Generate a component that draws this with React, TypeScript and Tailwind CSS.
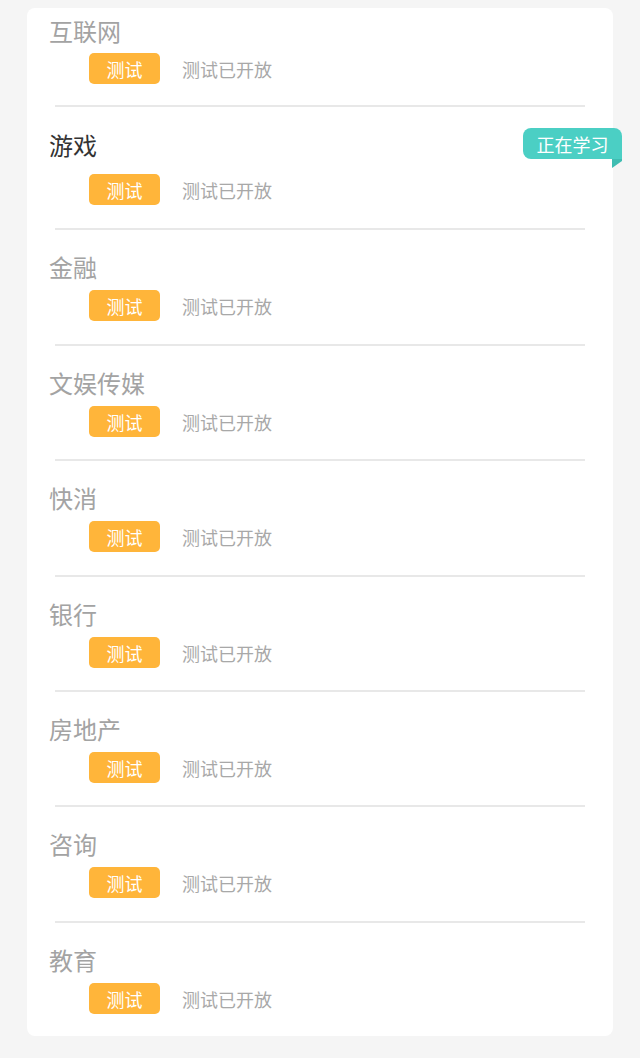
import React from 'react';

const industries = ['互联网', '游戏', '金融', '文娱传媒', '快消', '银行', '房地产', '咨询', '教育'];
const activeIndex = 1;

// bottom padding per row, keeps the dividers where the screen has them
const bottomPad = ['pb-[21px]', 'pb-[23px]', 'pb-[23px]', 'pb-[22px]', 'pb-[23px]', 'pb-[22px]', 'pb-[22px]', 'pb-[23px]', 'pb-[22px]'];

function LearningTag() {
  return (
    <div className="absolute right-[-9px] top-[23px]">
      <div className="h-[31px] w-[99px] rounded-[8px] rounded-br-none bg-[#4bcfc4] flex items-center justify-center text-white text-[18px] leading-none">
        正在学习
      </div>
      {/* little fold under the tag */}
      <svg className="absolute right-0 top-[31px]" width="10" height="9" viewBox="0 0 10 9">
        <polygon points="0,0 10,0 10,2 0,9" fill="#3fbdb2" />
      </svg>
    </div>
  );
}

export default function App() {
  return (
    <div
      className="min-h-[1058px] bg-[#f5f5f5] pt-[8px]"
      style={{ fontFamily: '"Noto Sans CJK SC", "Noto Sans", sans-serif' }}
    >
      <div className="mx-[27px] bg-white rounded-[8px]">
        {industries.map((name, i) => {
          const active = i === activeIndex;
          const first = i === 0;
          return (
            <div key={name} className="relative">
              {!first && <div className="mx-[28px] h-[2px] bg-[#e8e8e8]" />}
              <div
                className={
                  'px-[22px] ' + (first ? 'pt-[7px] ' : active ? 'pt-[22px] ' : 'pt-[21px] ') + bottomPad[i]
                }
              >
                <div className="h-[32px] flex items-center">
                  <span className={'text-[24px] leading-[32px] ' + (active ? 'text-[#333333]' : 'text-[#a3a3a3]')}>
                    {name}
                  </span>
                </div>
                <div
                  className={
                    'flex items-center ml-[40px] ' +
                    (first ? 'mt-[6px]' : active ? 'mt-[13px]' : 'mt-[7px]')
                  }
                >
                  <div className="w-[71px] h-[31px] rounded-[5px] bg-[#ffb53a] text-white text-[18px] flex items-center justify-center leading-none">
                    测试
                  </div>
                  <span className="ml-[22px] text-[18px] text-[#a8a8a8] leading-none">测试已开放</span>
                </div>
              </div>
              {active && <LearningTag />}
            </div>
          );
        })}
      </div>
    </div>
  );
}
